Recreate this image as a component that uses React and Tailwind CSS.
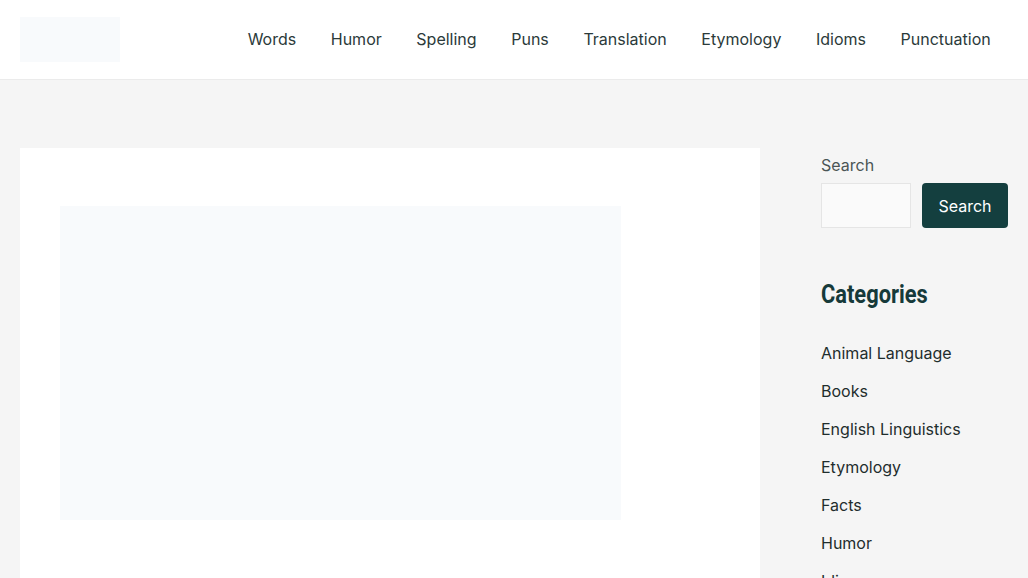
import React from 'react';

const NAV = ['Words', 'Humor', 'Spelling', 'Puns', 'Translation', 'Etymology', 'Idioms', 'Punctuation'];

const CATEGORIES = [
  'Animal Language',
  'Books',
  'English Linguistics',
  'Etymology',
  'Facts',
  'Humor',
  'Idioms',
];

export default function App() {
  return (
    <div className="min-h-screen bg-[#f5f5f5] font-['Inter',sans-serif] overflow-hidden h-[578px]">
      {/* Header */}
      <header className="h-20 bg-white border-b border-[#ebebeb] flex items-center justify-between px-5">
        <div className="w-[100px] h-[45px] bg-[#f8fafc]" />
        <nav className="flex items-center pb-[2px]">
          {NAV.map((item) => (
            <a key={item} href="#" className="px-[17.3px] text-[16px] text-[#2b3a3a] leading-6">
              {item}
            </a>
          ))}
        </nav>
      </header>

      <div className="flex px-5 pt-[68px]">
        {/* Main */}
        <main className="w-[740px] shrink-0 bg-white pt-[58px] pl-10 pb-10 h-[600px]">
          <div className="w-[561px] h-[314px] bg-[#f8fafc]" />
        </main>

        {/* Sidebar */}
        <aside className="ml-[61px] w-[187px] pt-[5px]">
          <label className="block text-[16px] leading-6 text-[#4b5555] mb-[6px]">Search</label>
          <div className="flex gap-[11px]">
            <input className="w-[90px] h-[45px] bg-[#fafafa] border border-[#e5e5e5] outline-none" />
            <button className="w-[86px] h-[45px] bg-[#143f3f] rounded text-white text-[16px]">
              Search
            </button>
          </div>

          <h2 className="mt-[51px] h-[31px] text-[26px] leading-[31px] font-bold text-[#163a3a] whitespace-nowrap font-['Roboto',sans-serif]">
            <span className="inline-block scale-x-[0.84] origin-left">Categories</span>
          </h2>

          <ul className="mt-[31px] flex flex-col gap-[14px]">
            {CATEGORIES.map((c) => (
              <li key={c}>
                <a href="#" className="text-[16px] leading-6 text-[#1f2d2d]">
                  {c}
                </a>
              </li>
            ))}
          </ul>
        </aside>
      </div>
    </div>
  );
}
